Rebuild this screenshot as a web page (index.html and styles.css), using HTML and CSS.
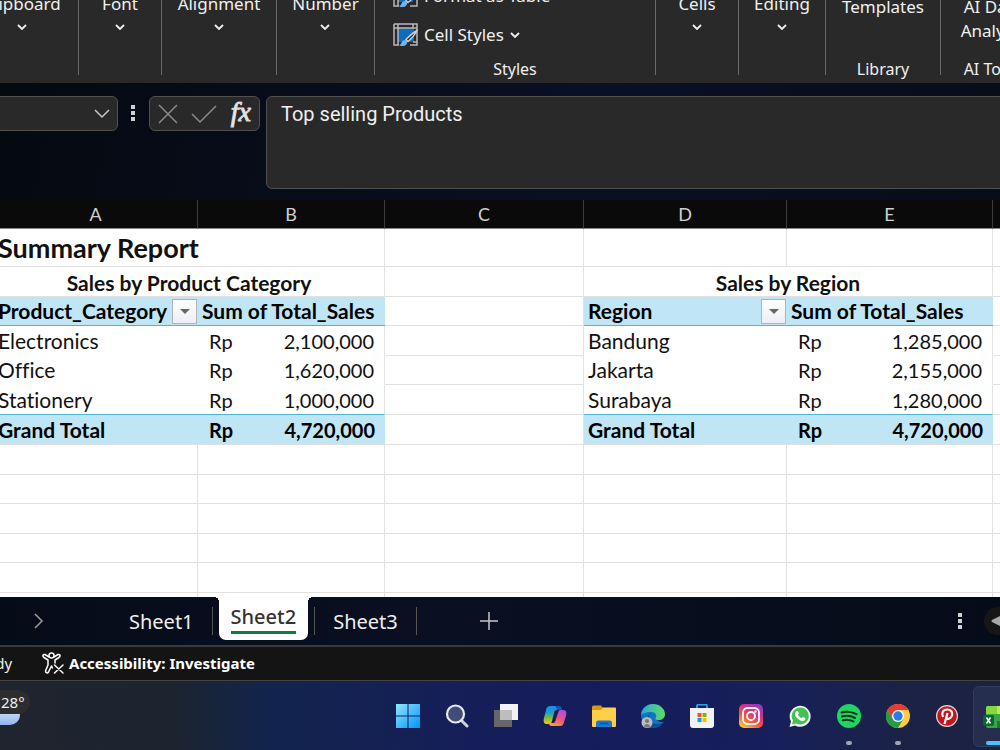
FILE: index.html
```html
<!DOCTYPE html>
<html lang="en">
	<head>
		<meta charset="utf-8">
		<title>Summary Report</title>
		<link rel="stylesheet" href="styles.css">
	</head>
	<body>
		<header class="ribbon">
			<div class="group clipboard">
				<button class="menu">Clipboard<svg class="chevron" viewBox="0 0 10 6"><path d="M1 1l4 4 4-4"/></svg></button>
			</div>
			<span class="divider"></span>
			<div class="group font">
				<button class="menu">Font<svg class="chevron" viewBox="0 0 10 6"><path d="M1 1l4 4 4-4"/></svg></button>
			</div>
			<span class="divider"></span>
			<div class="group alignment">
				<button class="menu">Alignment<svg class="chevron" viewBox="0 0 10 6"><path d="M1 1l4 4 4-4"/></svg></button>
			</div>
			<span class="divider"></span>
			<div class="group number">
				<button class="menu">Number<svg class="chevron" viewBox="0 0 10 6"><path d="M1 1l4 4 4-4"/></svg></button>
			</div>
			<span class="divider"></span>
			<div class="group styles">
				<button class="item">
					<svg class="item-icon" viewBox="0 0 25 24"><rect x="5" y="5" width="15" height="13" fill="#0f6cbd"/><path d="M1 1h23v21h-7M1 1v21h5M1 5h23M5 1v21" fill="none" stroke="#b8b8b8" stroke-width="1.500"/><path d="M24 7.500c-4 2-8 6-11 9l2 2c4-3 7-7 9-11z" fill="#292929" stroke="#d0d0d0" stroke-width="1.400"/><path d="M6 22c3 0 2-5 6-5 4 1 2 6-2 6-2 0-3 0-4-1z" fill="#69b5f5"/></svg>
					Format as Table
					<svg class="chevron" viewBox="0 0 10 6"><path d="M1 1l4 4 4-4"/></svg>
				</button>
				<button class="item">
					<svg class="item-icon" viewBox="0 0 25 24"><rect x="5" y="5" width="16" height="14" fill="#0f6cbd"/><path d="M1 1h23v21h-7M1 1v21h5M1 5h23M5 1v21M20 1v4M20 19h4" fill="none" stroke="#b8b8b8" stroke-width="1.500"/><path d="M24 7.500c-4 2-8 6-11 9l2 2c4-3 7-7 9-11z" fill="#292929" stroke="#d0d0d0" stroke-width="1.400"/><path d="M6 22c3 0 2-5 6-5 4 1 2 6-2 6-2 0-3 0-4-1z" fill="#69b5f5"/></svg>
					Cell Styles
					<svg class="chevron" viewBox="0 0 10 6"><path d="M1 1l4 4 4-4"/></svg>
				</button>
				<span class="group-name">Styles</span>
			</div>
			<span class="divider"></span>
			<div class="group cells">
				<button class="menu">Cells<svg class="chevron" viewBox="0 0 10 6"><path d="M1 1l4 4 4-4"/></svg></button>
			</div>
			<span class="divider"></span>
			<div class="group editing">
				<button class="menu">Editing<svg class="chevron" viewBox="0 0 10 6"><path d="M1 1l4 4 4-4"/></svg></button>
			</div>
			<span class="divider"></span>
			<div class="group library">
				<button class="big">Templates</button>
				<span class="group-name">Library</span>
			</div>
			<span class="divider"></span>
			<div class="group ai">
				<button class="big">AI Data<br>Analysis</button>
				<span class="group-name">AI Tools</span>
			</div>
		</header>

		<section class="formula-bar">
			<div class="name-box">
				<input type="text" aria-label="Name Box">
				<button aria-label="Names"><svg width="16" height="10" viewBox="0 0 16 10"><path d="M1 1l7 7 7-7" fill="none" stroke="#c8c8c8" stroke-width="1.500"/></svg></button>
			</div>
			<svg class="dots" width="5" height="17" viewBox="0 0 5 17"><path d="M0 0h4v4H0zM0 6h4v4H0zM0 12h4v4H0z" fill="#d0d0d0"/></svg>
			<div class="entry">
				<button aria-label="Cancel"><svg width="20" height="20" viewBox="0 0 20 20"><path d="M1 1l18 18M19 1L1 19" fill="none" stroke="#8a8a8a" stroke-width="1.500"/></svg></button>
				<button aria-label="Enter"><svg width="26" height="20" viewBox="0 0 26 20"><path d="M1 10l8 8L25 2" fill="none" stroke="#8a8a8a" stroke-width="1.500"/></svg></button>
				<button class="fx" aria-label="Insert Function">fx</button>
			</div>
			<textarea class="formula" aria-label="Formula">Top selling Products</textarea>
		</section>

		<main class="sheet">
			<table>
				<colgroup>
					<col class="col-a"><col class="col-b"><col class="col-c"><col class="col-d"><col class="col-e"><col>
				</colgroup>
				<thead>
					<tr><th>A</th><th>B</th><th>C</th><th>D</th><th>E</th><th></th></tr>
				</thead>
				<tbody>
					<tr class="title"><td colspan="2">Summary Report</td><td></td><td></td><td></td><td></td></tr>
					<tr class="caption"><td colspan="2">Sales by Product Category</td><td></td><td colspan="2">Sales by Region</td><td></td></tr>
					<tr>
						<td class="head"><div class="field">Product_Category<button class="filter" aria-label="Filter Product_Category"></button></div></td>
						<td class="head end">Sum of Total_Sales</td>
						<td></td>
						<td class="head"><div class="field">Region<button class="filter" aria-label="Filter Region"></button></div></td>
						<td class="head end">Sum of Total_Sales</td>
						<td></td>
					</tr>
					<tr>
						<td class="data">Electronics</td>
						<td class="data end"><div class="money"><span>Rp</span><span>2,100,000</span></div></td>
						<td></td>
						<td class="data">Bandung</td>
						<td class="data end"><div class="money"><span>Rp</span><span>1,285,000</span></div></td>
						<td></td>
					</tr>
					<tr>
						<td class="data">Office</td>
						<td class="data end"><div class="money"><span>Rp</span><span>1,620,000</span></div></td>
						<td></td>
						<td class="data">Jakarta</td>
						<td class="data end"><div class="money"><span>Rp</span><span>2,155,000</span></div></td>
						<td></td>
					</tr>
					<tr>
						<td class="data last">Stationery</td>
						<td class="data last end"><div class="money"><span>Rp</span><span>1,000,000</span></div></td>
						<td></td>
						<td class="data last">Surabaya</td>
						<td class="data last end"><div class="money"><span>Rp</span><span>1,280,000</span></div></td>
						<td></td>
					</tr>
					<tr class="total">
						<td class="sum">Grand Total</td>
						<td class="sum end"><div class="money"><span>Rp</span><span>4,720,000</span></div></td>
						<td></td>
						<td class="sum">Grand Total</td>
						<td class="sum end"><div class="money"><span>Rp</span><span>4,720,000</span></div></td>
						<td></td>
					</tr>
					<tr><td></td><td></td><td></td><td></td><td></td><td></td></tr>
					<tr><td></td><td></td><td></td><td></td><td></td><td></td></tr>
					<tr><td></td><td></td><td></td><td></td><td></td><td></td></tr>
					<tr><td></td><td></td><td></td><td></td><td></td><td></td></tr>
					<tr><td></td><td></td><td></td><td></td><td></td><td></td></tr>
					<tr class="cut"><td></td><td></td><td></td><td></td><td></td><td></td></tr>
				</tbody>
			</table>
		</main>

		<nav class="tabs">
			<button class="next" aria-label="Next sheet"><svg width="10" height="16" viewBox="0 0 10 16"><path d="M1 1l7 7-7 7" fill="none" stroke="#9a9a9a" stroke-width="1.500"/></svg></button>
			<button class="tab">Sheet1</button>
			<span class="tab-line"></span>
			<button class="tab active"><span>Sheet2</span></button>
			<span class="tab-line"></span>
			<button class="tab">Sheet3</button>
			<span class="tab-line"></span>
			<button class="add" aria-label="New sheet"><svg width="18" height="18" viewBox="0 0 18 18"><path d="M9 0v18M0 9h18" stroke="#c8c8c8" stroke-width="1.500"/></svg></button>
			<svg class="tab-dots" width="4" height="17" viewBox="0 0 4 17"><path d="M0 0h4v4H0zM0 6h4v4H0zM0 12h4v4H0z" fill="#d0d0d0"/></svg>
			<button class="scroll" aria-label="Scroll left"><svg width="12" height="14" viewBox="0 0 12 14"><path d="M11 1v12L1 8q-1-1 0-2z" fill="#a8a8a8"/></svg></button>
		</nav>

		<footer class="status">
			<span class="ready">Ready</span>
			<button class="access">
				<svg width="22" height="22" viewBox="0 0 22 22" fill="none" stroke="#fff" stroke-width="1.500" stroke-linecap="round" stroke-linejoin="round"><circle cx="9.500" cy="3.500" r="2.500"/><path d="M7 5L3 2.500C1 2 0 4 2 5.500L6 8v5l-2.500 6c0 2 2 2.500 3 1L9.500 14l1 2M12 5l4-2.500c2-.5 3 1.500 1 3L13 8v3M12.500 13l8.500 8M21 13l-8.500 8"/></svg>
				Accessibility: Investigate
			</button>
		</footer>

		<div class="taskbar">
			<div class="weather">
				<span class="cloud"></span>
				<span class="degrees">28°</span>
			</div>
			<button class="app" aria-label="Start">
				<svg viewBox="0 0 24 24"><defs><linearGradient id="win" x1="0" y1="0" x2="24" y2="24" gradientUnits="userSpaceOnUse"><stop stop-color="#8fe6ff"/><stop offset="1" stop-color="#0094fa"/></linearGradient></defs><path d="M0 0h11.500v11.500H0zM12.500 0H24v11.500H12.500zM0 12.500h11.500V24H0zM12.500 12.500H24V24H12.500z" fill="url(#win)"/></svg>
			</button>
			<button class="app" aria-label="Search">
				<svg viewBox="0 0 24 24"><path d="M17 17l5 5" stroke="#cfd2dc" stroke-width="3" stroke-linecap="round"/><circle cx="10.500" cy="10" r="8.500" fill="#434c78" stroke="#e8eaf0" stroke-width="2.200"/></svg>
			</button>
			<button class="app" aria-label="Task view">
				<svg viewBox="0 0 24 24"><path d="M0 6h18v17H0z" fill="#666"/><path d="M6 0h18v16H6z" fill="#f2f2f2"/><path d="M6 6h12v10H6z" fill="#bdbdbd"/></svg>
			</button>
			<button class="app" aria-label="Copilot">
				<svg viewBox="0 0 24 24"><defs><linearGradient id="cpa" x1="0" y1="0" x2="0" y2="1"><stop stop-color="#1b8fe8"/><stop offset=".35" stop-color="#1c9bd8"/><stop offset=".6" stop-color="#67b84b"/><stop offset="1" stop-color="#f6c913"/></linearGradient><linearGradient id="cpb" x1=".8" y1="0" x2=".2" y2="1"><stop stop-color="#a34ee6"/><stop offset=".5" stop-color="#f0567c"/><stop offset="1" stop-color="#ffa13b"/></linearGradient></defs><path d="M7 2h8c2 0 3 1 3.500 4H14c-2 0-2.500 1-3 3l-2 8c-.5 2-1 3-3 3H4c-3 0-4-2-3-6l2-8c.7-3 2-4 4-4z" fill="url(#cpa)"/><path d="M12 2h4c2 0 2.500 1 3 4h-4.500c-1-.2-1.500-4-2.500-4z" fill="#1254b7"/><path d="M17 22H9c-2 0-3-1-3.500-3H10c2 0 2.500-2 3-4l2-6c.5-2 1-3 3-3h2c3 0 4 2 3 6l-2 6c-.7 3-2 4-4 4z" fill="url(#cpb)"/></svg>
			</button>
			<button class="app" aria-label="File Explorer">
				<svg viewBox="0 0 24 24"><path d="M0 3q0-1.500 1.500-1.500H9l2 2.500v5H0z" fill="#d9960f"/><path d="M0 6h9l2-2.500h12q1 0 1 1V22q0 1-1 1H1q-1 0-1-1z" fill="#ffcf48"/><path d="M4 23v-4q0-2.500 2.500-2.500h11q2.500 0 2.500 2.500v4z" fill="#1976d2"/><path d="M8 19.500h8" stroke="#0b4c94" stroke-width="1.200"/></svg>
			</button>
			<button class="app" aria-label="Edge">
				<svg viewBox="0 0 24 24"><defs><linearGradient id="edg" x1="0" y1="0" x2="1" y2="0"><stop stop-color="#2ba7e0"/><stop offset="1" stop-color="#5be05a"/></linearGradient></defs><path d="M0 11C0 5 5 0 12 0c4 0 8 8 5 13s5 6 6 4c-2 4-6 7-11 7C5 24 0 18 0 11z" fill="#1272c4"/><path d="M9 10c-3 4 1 11 9 10 3-.5 4-2 5-3-2 4-6 7-11 7-7 0-9-10-3-14z" fill="#0d4f9b"/><path d="M0 11C1 4 6 0 12 0c7 0 12 5 12 10 0 4-3 6-6 6-4 0-4-1-3-3 1-3-2-5-5-5-5 0-9 2-10 3z" fill="url(#edg)"/><circle cx="6" cy="18.500" r="5.500" fill="#bcbcbc"/><circle cx="6" cy="17" r="2" fill="#777"/><path d="M2.500 22q3.500-4 7 0-3.500 3-7 0z" fill="#777"/></svg>
			</button>
			<button class="app" aria-label="Store">
				<svg viewBox="0 0 24 24"><path d="M7 5V2q0-1.500 1.500-1.500h7Q17 .5 17 2v3" fill="none" stroke="#2aa5e8" stroke-width="1.800"/><path d="M0 4h24v17q0 3-3 3H3q-3 0-3-3z" fill="#f2f2f2"/><path d="M7.500 9h4v4h-4z" fill="#f25022"/><path d="M12.500 9h4v4h-4z" fill="#7fba00"/><path d="M7.500 14h4v4h-4z" fill="#00a4ef"/><path d="M12.500 14h4v4h-4z" fill="#ffb900"/></svg>
			</button>
			<button class="app" aria-label="Instagram">
				<svg viewBox="0 0 24 24"><defs><linearGradient id="ins" x1=".2" y1="1" x2=".8" y2="0"><stop stop-color="#ffc93c"/><stop offset=".35" stop-color="#f7593b"/><stop offset=".65" stop-color="#d82f84"/><stop offset="1" stop-color="#8a3ac8"/></linearGradient></defs><rect width="24" height="24" rx="5" fill="url(#ins)"/><g fill="none" stroke="#fff" stroke-width="1.800"><rect x="4" y="4" width="16" height="16" rx="4.500"/><circle cx="12" cy="12" r="4"/></g><circle cx="16.500" cy="7.500" r="1.200" fill="#fff"/></svg>
			</button>
			<button class="app" aria-label="WhatsApp">
				<svg viewBox="0 0 24 24"><path d="M1.500 23l1.500-5.500a10.500 10.500 0 1 1 4 4z" fill="#f4f4f4"/><path d="M4 20.500l1-4a8.500 8.500 0 1 1 3.200 3z" fill="#40c351"/><path d="M8 7.500c1-1 1.800-.8 2.200.2l.7 1.700-1 1.400c.8 1.600 2 2.700 3.600 3.400l1.300-1.300 2.500 1.200c.6 2-1.300 3-2.800 2.800C10.500 16.500 7 12.500 7 9.700c0-1 .4-1.700 1-2.200z" fill="#fff"/></svg>
			</button>
			<button class="app running" aria-label="Spotify">
				<svg viewBox="0 0 24 24"><circle cx="12" cy="12" r="12" fill="#1ed760"/><path d="M4.500 8.500q8-2.200 15 1.700M5 12.500q7-1.800 13 1.500M5.800 16.200q6-1.400 10.700 1.300" fill="none" stroke="#10301c" stroke-width="2" stroke-linecap="round"/></svg>
			</button>
			<button class="app running" aria-label="Chrome">
				<svg viewBox="0 0 24 24"><circle cx="12" cy="12" r="12" fill="#fc4"/><path d="M1.600 6A12 12 0 0 1 22.400 6H12v6l-5.200 3z" fill="#e63b30"/><path d="M1.600 6A12 12 0 0 0 12 24l5.200-9H12l-5.200 0z" fill="#269b48"/><circle cx="12" cy="12" r="6" fill="#fff"/><circle cx="12" cy="12" r="4.700" fill="#2a7bee"/></svg>
			</button>
			<button class="app" aria-label="Pinterest">
				<svg viewBox="0 0 24 24"><circle cx="12" cy="12" r="11" fill="#d9d9dd"/><circle cx="12" cy="12" r="9.800" fill="#c4151f"/><path d="M9.500 20l3-11M8 13c-2-4 0-7.500 4.200-7.500 4 0 5.800 3 4.800 6-1 3.500-5 4.200-5.800 2" fill="none" stroke="#fff" stroke-width="2.200"/></svg>
			</button>
			<button class="app current" aria-label="Excel">
				<svg viewBox="0 0 24 24"><path d="M3 3q0-2 2-2h17q2 0 2 2v18q0 2-2 2H5q-2 0-2-2z" fill="#3ba53e"/><path d="M3 3q0-2 2-2h9v8H3z" fill="#86d93c"/><path d="M14 1h8q2 0 2 2v6H14z" fill="#b6e95c"/><path d="M14 16h10v5q0 2-2 2h-8z" fill="#167a3c"/><rect y="10" width="11" height="11" rx="2" fill="#0d6337"/><path d="M3.500 12.500l4 6M7.500 12.500l-4 6" stroke="#fff" stroke-width="1.500"/></svg>
			</button>
		</div>
	</body>
</html>
```
FILE: styles.css
```css
* {
	box-sizing: border-box;
}
html, body {
	height: 100%;
}
body {
	display: flex;
	flex-direction: column;
	margin: 0;
	overflow: hidden;
	background-color: #070c19;
	color: #f0f0f0;
	font-family: "Noto Sans", "Open Sans", sans-serif;
	font-size: 17px;
	line-height: 24px;
}
button, input, textarea {
	margin: 0;
	padding: 0;
	border: none;
	background: none;
	color: inherit;
	font: inherit;
}
svg {
	display: block;
	flex: none;
}

/* ribbon, scrolled a little under the top edge */
.ribbon {
	display: flex;
	flex: none;
	margin-top: -16px;
	padding-bottom: 2px;
	background-color: #292929;
	box-shadow: 0 1px 2px #000;
	white-space: nowrap;
}
.divider {
	flex: none;
	width: 1px;
	margin-bottom: 6px;
	background-color: #6a6a6a;
}
.group {
	display: flex;
	flex: none;
	flex-direction: column;
	align-items: center;
}
.clipboard {
	width: 112px;
	margin-left: -34px;
}
.font, .cells {
	width: 82px;
}
.alignment, .library {
	width: 114px;
}
.number {
	width: 97px;
}
.styles {
	width: 280px;
}
.editing {
	width: 86px;
}
.ai {
	width: 104px;
}
.menu {
	display: flex;
	flex-direction: column;
	align-items: center;
	gap: 8px;
	padding-top: 8px;
}
.chevron {
	width: 10px;
	height: 6px;
	fill: none;
	stroke: #f0f0f0;
	stroke-width: 1.8;
}
.item {
	display: flex;
	align-self: flex-start;
	align-items: center;
	gap: 6px;
	padding: 0 0 0 18px;
}
.item + .item {
	margin: 15px 0 10px;
}
.item-icon {
	width: 25px;
	height: 24px;
}
.big {
	padding-top: 11px;
}
.group-name {
	margin-top: auto;
	font-size: 16px;
}

.formula-bar {
	display: flex;
	flex: none;
	align-items: flex-start;
	padding: 13px 0 11px;
	background: linear-gradient(100deg, #050910, #0a1024 60%, #080d1a);
}
.name-box, .entry, .formula {
	border: 1px solid #505050;
	border-radius: 6px;
	background-color: #292929;
}
.name-box {
	display: flex;
	align-items: center;
	width: 124px;
	height: 35px;
	margin-left: -6px;
	padding-right: 7px;
}
.name-box input {
	flex: 1;
	min-width: 0;
}
.dots {
	margin: 9px 13px 0;
}
.entry {
	display: flex;
	align-items: center;
	justify-content: space-between;
	width: 111px;
	height: 35px;
	padding: 0 8px;
}
.fx {
	padding-bottom: 4px;
	font-family: "Liberation Serif", serif;
	font-size: 28px;
	font-style: italic;
	-webkit-text-stroke: 1px #d8d8d8;
}
.formula {
	flex: 1;
	height: 93px;
	margin: 0 -6px 0 6px;
	padding: 5px 14px;
	resize: none;
	font-family: Roboto, sans-serif;
	font-size: 20px;
}

.sheet {
	flex: 1;
	overflow: hidden;
	background-color: #fff;
	color: #111;
	font-family: Lato, sans-serif;
	font-size: 21px;
	font-variant-ligatures: none;
}
.sheet table {
	width: calc(100% + 6px);
	margin-left: -6px;
	table-layout: fixed;
	border-collapse: separate;
	border-spacing: 0;
	white-space: nowrap;
}
.col-a {
	width: 204px;
}
.col-b {
	width: 187px;
}
.col-c {
	width: 199px;
}
.col-d {
	width: 203px;
}
.col-e {
	width: 206px;
}
.sheet th {
	height: 29px;
	padding: 0;
	border-right: 1px solid #3c3c3c;
	border-bottom: 1px solid #8a8a8a;
	background-color: #0a0a0a;
	color: #d0d0d0;
	font-size: 18px;
	font-weight: normal;
}
.sheet td {
	height: 30px;
	padding: 0 4px;
	border-right: 1px solid #e1e1e1;
	border-bottom: 1px solid #e1e1e1;
}
.sheet tr:nth-child(odd) td {
	height: 29px;
}
.sheet tr.title td {
	height: 38px;
	font-size: 27px;
	font-weight: bold;
}
.sheet th:last-child, .sheet td:last-child {
	border-right: none;
}
.caption td {
	padding-top: 2px;
	text-align: center;
	font-weight: bold;
}
.sheet .head, .sheet .sum {
	border-right: none;
	background-color: #c0e6f5;
	color: #000;
	font-weight: bold;
}
.sheet .head, .sheet .last {
	border-bottom-color: #4db5dd;
}
.sheet .data {
	border-right: none;
}
.sheet .data:not(.last) {
	border-bottom-color: #fff;
}
.sheet .data.end {
	border-right: 1px solid #e1e1e1;
}
.sheet tr.total td {
	height: 30px;
}
.sheet tr.cut td {
	height: 5px;
	border-bottom: none;
}
.field {
	display: flex;
	align-items: center;
	justify-content: space-between;
	margin-right: -3px;
}
.filter {
	width: 25px;
	height: 25px;
	border: 1px solid #b0b3ba;
	background: linear-gradient(#fff, #eceef3);
}
.filter::before {
	content: "";
	display: block;
	width: 0;
	margin: 0 auto;
	border: 5px solid transparent;
	border-top-color: #666;
	border-bottom: none;
}
.money {
	display: flex;
	justify-content: space-between;
	padding: 0 6px 0 7px;
	font-size: 20px;
}

.tabs {
	display: flex;
	flex: none;
	align-items: center;
	height: 50px;
	border-bottom: 2px solid #3a3a3a;
	background: linear-gradient(90deg, #060b18, #0a1022 45%, #060b19);
	font-size: 20px;
}
.next {
	margin: 0 67px 0 34px;
}
.tab {
	flex: none;
	padding: 2px 18px 0;
}
.tab-line {
	flex: none;
	width: 1px;
	height: 28px;
	background-color: #555;
}
.tab.active {
	position: relative;
	align-self: flex-start;
	height: 43px;
	margin: 0 6px;
	padding: 2px 12px 0;
	border-radius: 0 0 7px 7px;
	background-color: #fff;
	color: #333;
	font-weight: 500;
}
.active span {
	display: block;
	padding-bottom: 2px;
	border-bottom: 3px solid #107c41;
}
.active::before, .active::after {
	content: "";
	position: absolute;
	top: 0;
	width: 5px;
	height: 5px;
}
.active::before {
	right: 100%;
	background: radial-gradient(circle at 0 100%, transparent 5px, #fff 5px);
}
.active::after {
	left: 100%;
	background: radial-gradient(circle at 100% 100%, transparent 5px, #fff 5px);
}
.add {
	margin-left: 63px;
}
.tab-dots {
	margin-left: auto;
}
.scroll {
	display: flex;
	flex: none;
	align-items: center;
	width: 28px;
	height: 28px;
	margin: 0 -12px 0 22px;
	padding-left: 7px;
	border-radius: 14px;
	background-color: #161616;
}

.status {
	display: flex;
	flex: none;
	align-items: center;
	height: 34px;
	padding-bottom: 1px;
	border-bottom: 1px solid #444;
	background-color: #141414;
	font-size: 15px;
}
.ready {
	width: 42px;
	margin-left: -31px;
}
.access {
	display: flex;
	align-items: center;
	gap: 5px;
	margin-left: 31px;
	color: #fff;
	font-size: 15px;
	font-weight: 700;
}

.taskbar {
	display: flex;
	flex: none;
	height: 69px;
	background: linear-gradient(90deg, #20242e, #1c2431 18%, #12244e 27%, #161f58 45%, #151c5c 60%, #17205a 78%, #1b2247 90%, #1b2240);
}
.weather {
	position: relative;
	flex: 0 0 383px;
	font-size: 15px;
}
.cloud {
	position: absolute;
	top: 24px;
	left: -20px;
	width: 40px;
	height: 20px;
	border-radius: 10px;
	background: linear-gradient(#e8f3ff, #8db4ee);
}
.degrees {
	position: absolute;
	top: 9px;
	left: -14px;
	padding: 0 5px 0 15px;
	border-radius: 12px;
	background-color: #2d2d2d;
}
.app {
	position: relative;
	display: flex;
	flex: none;
	align-items: center;
	justify-content: center;
	width: 49px;
}
.app svg {
	width: 24px;
	height: 24px;
}
.running::after {
	content: "";
	position: absolute;
	bottom: 5px;
	width: 6px;
	height: 4px;
	border-radius: 2px;
	background-color: #a0a4b8;
}
.current {
	width: 44px;
	height: 61px;
	margin: 5px 0 0 2px;
	border: 1px solid #343c60;
	border-radius: 6px;
	background-color: #262e50;
}
.current::after {
	content: "";
	position: absolute;
	bottom: 1px;
	left: 12px;
	width: 20px;
	height: 4px;
	border-radius: 2px;
	background-color: #4cc2ff;
}
```
